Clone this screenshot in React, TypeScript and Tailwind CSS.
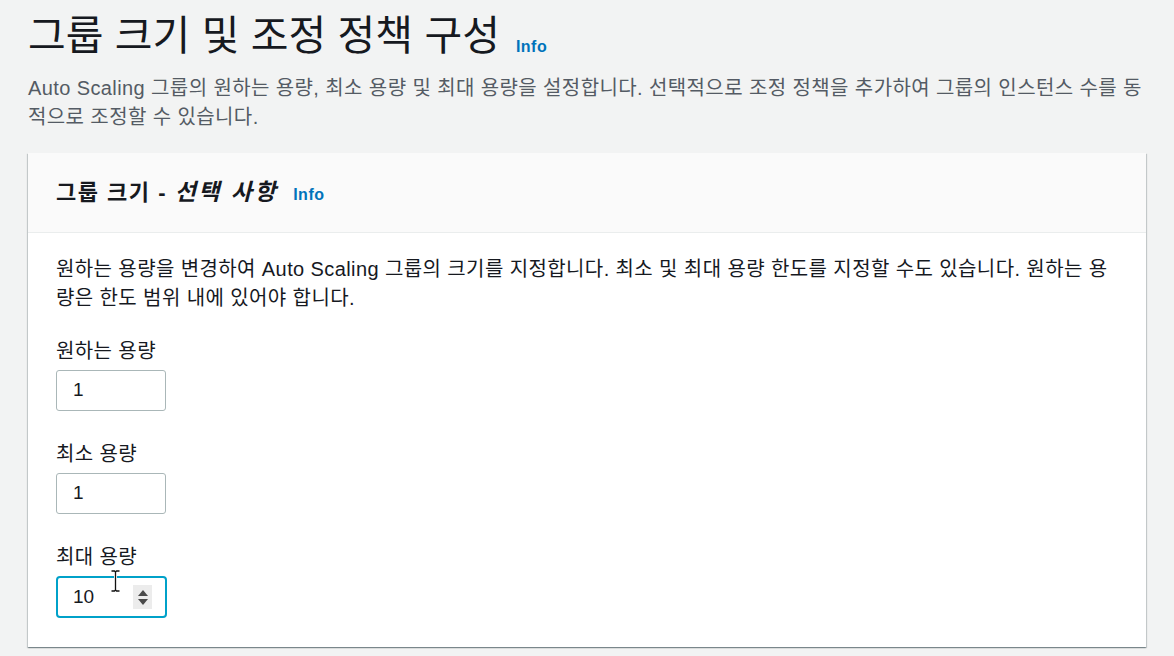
import React from "react";

const font = { fontFamily: "'Liberation Sans', 'Noto Sans CJK KR', sans-serif" };

function NumberField({ value, focused }: { value: string; focused?: boolean }) {
  return (
    <div
      className={
        focused
          ? "relative flex h-[42px] w-[111px] items-center rounded-[4px] border-2 border-[#00a1c9] bg-white pl-[15px] pr-[13px]"
          : "flex h-[41px] w-[110px] items-center rounded-[3px] border border-[#aab7b8] bg-white pl-[16px]"
      }
    >
      <span className="flex-1 text-[19px] text-[#16191f]">{value}</span>
      {focused && (
        <>
          {/* native spinner */}
          <span className="flex h-[24px] w-[19px] flex-col items-center justify-center gap-[3px] bg-[#ececec]">
            <svg width="10" height="6" viewBox="0 0 10 6">
              <path d="M5 0 L10 6 L0 6 Z" fill="#4a4a4a" />
            </svg>
            <svg width="10" height="6" viewBox="0 0 10 6">
              <path d="M0 0 L10 0 L5 6 Z" fill="#4a4a4a" />
            </svg>
          </span>
          {/* mouse I-beam */}
          <svg className="absolute left-[52px] top-[-8px]" width="11" height="22" viewBox="0 0 11 22">
            <path d="M1.5 1 H4.5 L5.5 2 L6.5 1 H9.5 M5.5 2 V20 M1.5 21 H4.5 L5.5 20 L6.5 21 H9.5" stroke="#ffffff" strokeWidth="3" fill="none" />
            <path d="M1.5 1 H4.5 L5.5 2 L6.5 1 H9.5 M5.5 2 V20 M1.5 21 H4.5 L5.5 20 L6.5 21 H9.5" stroke="#111" strokeWidth="1.3" fill="none" />
          </svg>
        </>
      )}
    </div>
  );
}

function Field({ label, value, focused }: { label: string; value: string; focused?: boolean }) {
  return (
    <div className="flex flex-col gap-[5px]">
      <div className="text-[20px] leading-[28px] tracking-[0.4px] text-[#16191f]">{label}</div>
      <NumberField value={value} focused={focused} />
    </div>
  );
}

export default function App() {
  return (
    <div className="min-h-screen bg-[#f2f3f3] px-[28px] pt-[12px]" style={font}>
      <h1 className="flex items-end gap-[16px] text-[41px] leading-[48px] font-normal text-[#16191f]">
        <span>그룹 크기 및 조정 정책 구성</span>
        <a className="mb-[3px] text-[16px] font-bold leading-[20px] tracking-[0.5px] text-[#0073bb]">Info</a>
      </h1>

      <p className="mt-[14px] text-[20px] leading-[28.5px] tracking-[0.4px] text-[#545b64]">
        <span className="block whitespace-nowrap">
          Auto Scaling 그룹의 원하는 용량, 최소 용량 및 최대 용량을 설정합니다. 선택적으로 조정 정책을 추가하여 그룹의 인스턴스 수를 동
        </span>
        <span className="block whitespace-nowrap">적으로 조정할 수 있습니다.</span>
      </p>

      <section className="mt-[22px] bg-white shadow-[0_1px_1px_0_rgba(0,28,36,0.3),1px_1px_1px_0_rgba(0,28,36,0.15),-1px_1px_1px_0_rgba(0,28,36,0.15)]">
        <div className="flex h-[80px] items-center gap-[15px] border-b border-[#eaeded] bg-[#fafafa] px-[28px]">
          <h2 className="text-[22px] font-bold leading-[30px] tracking-[1.5px] text-[#16191f]">
            그룹 크기 - <i className="text-[23px] tracking-[2.5px]">선택 사항</i>
          </h2>
          <a className="mt-[4px] text-[16px] font-bold leading-[20px] tracking-[0.5px] text-[#0073bb]">Info</a>
        </div>

        <div className="px-[28px] pb-[29px] pt-[22px]">
          <p className="text-[20px] leading-[28.5px] tracking-[0.4px] text-[#16191f]">
            <span className="block whitespace-nowrap">
              원하는 용량을 변경하여 Auto Scaling 그룹의 크기를 지정합니다. 최소 및 최대 용량 한도를 지정할 수도 있습니다. 원하는 용
            </span>
            <span className="block whitespace-nowrap">량은 한도 범위 내에 있어야 합니다.</span>
          </p>

          <div className="mt-[25px] flex flex-col gap-[29px]">
            <Field label="원하는 용량" value="1" />
            <Field label="최소 용량" value="1" />
            <Field label="최대 용량" value="10" focused />
          </div>
        </div>
      </section>
    </div>
  );
}
